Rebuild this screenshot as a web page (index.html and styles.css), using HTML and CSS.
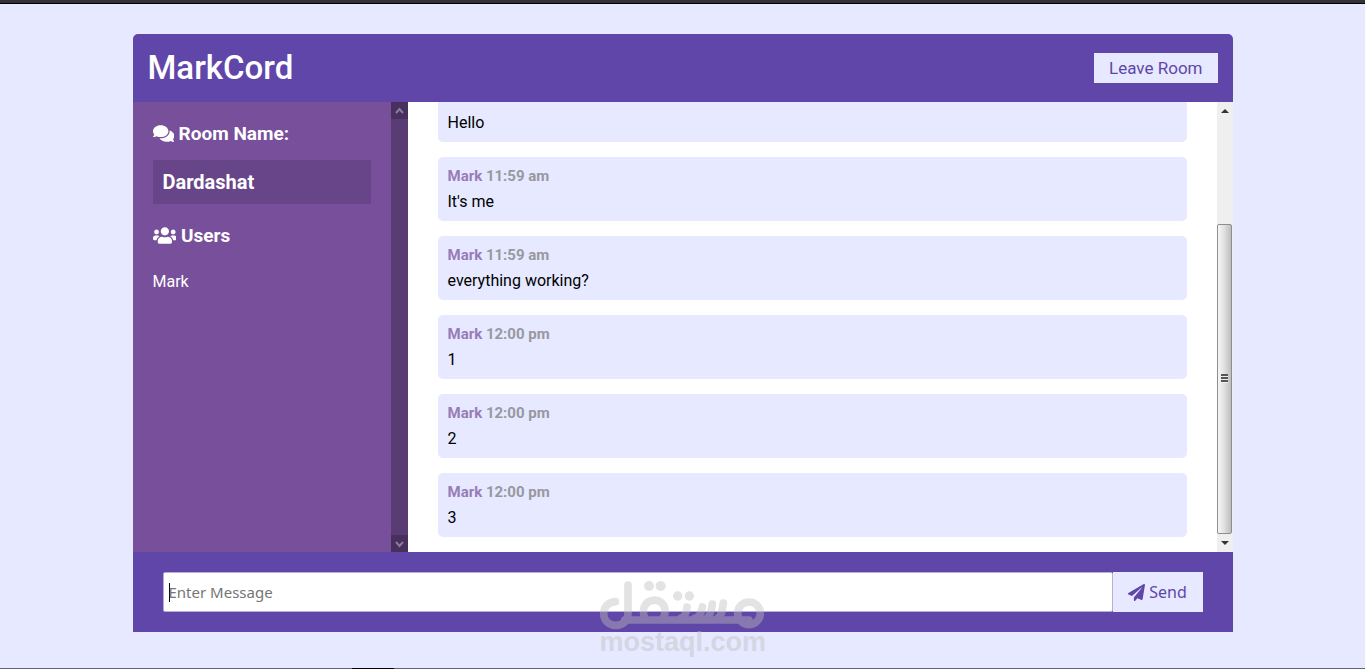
FILE: index.html
```html
<!DOCTYPE html>
<html lang="en">
<head>
  <meta charset="UTF-8">
  <meta name="viewport" content="width=device-width, initial-scale=1.0">
  <title>MarkCord</title>
  <link rel="stylesheet" href="styles.css">
</head>
<body>

<div class="top-strip"></div>

<div class="chat-container">
  <header class="chat-header">
    <h1>MarkCord</h1>
    <a href="#" class="btn">Leave Room</a>
  </header>

  <main class="chat-main">
    <aside class="chat-sidebar">
      <div class="sidebar-content">
        <h3>
          <svg class="icon-comments" viewBox="0 0 576 512"><path d="M416 192c0-88.400-93.100-160-208-160S0 103.600 0 192c0 34.300 14.100 65.900 38 92-13.400 30.200-35.500 54.200-35.800 54.500-2.200 2.300-2.800 5.700-1.500 8.700S4.800 352 8 352c36.600 0 66.900-12.300 88.700-25 32.200 15.700 70.300 25 111.300 25 114.900 0 208-71.600 208-160zm122 220c23.900-26 38-57.700 38-92 0-66.900-53.500-124.200-129.300-148.100.9 6.600 1.300 13.300 1.300 20.100 0 105.900-107.700 192-240 192-10.800 0-21.300-.8-31.700-1.900C207.800 439.600 281.800 480 368 480c41 0 79.100-9.200 111.300-25 21.800 12.700 52.100 25 88.700 25 3.200 0 6.100-1.900 7.300-4.800 1.300-2.900.7-6.300-1.500-8.700-.3-.3-22.400-24.200-35.800-54.500z"/></svg>
          Room Name:
        </h3>
        <h2>Dardashat</h2>
        <h3>
          <svg class="icon-users" viewBox="0 0 640 512"><path d="M96 224c35.300 0 64-28.700 64-64s-28.700-64-64-64-64 28.700-64 64 28.700 64 64 64zm448 0c35.300 0 64-28.700 64-64s-28.700-64-64-64-64 28.700-64 64 28.700 64 64 64zm32 32h-64c-17.600 0-33.500 7.100-45.100 18.600 40.300 22.100 68.900 62 75.100 109.400h66c17.700 0 32-14.300 32-32v-32c0-35.300-28.700-64-64-64zm-256 0c61.900 0 112-50.100 112-112S381.900 32 320 32 208 82.100 208 144s50.100 112 112 112zm76.800 32h-8.300c-20.800 10-43.900 16-68.500 16s-47.600-6-68.500-16h-8.300C179.600 288 128 339.600 128 403.200V432c0 26.500 21.500 48 48 48h288c26.500 0 48-21.500 48-48v-28.800c0-63.600-51.600-115.200-115.200-115.200zm-223.700-13.400C161.500 263.100 145.600 256 128 256H64c-35.300 0-64 28.700-64 64v32c0 17.700 14.300 32 32 32h65.900c6.300-47.400 34.900-87.300 75.200-109.400z"/></svg>
          Users
        </h3>
        <ul class="user-list">
          <li>Mark</li>
        </ul>
      </div>
      <div class="scrollbar-dark">
        <span class="arrow"><svg viewBox="0 0 9 8"><path d="M1 6l3.500-4L8 6"/></svg></span>
        <span class="arrow"><svg viewBox="0 0 9 8"><path d="M1 2l3.500 4L8 2"/></svg></span>
      </div>
    </aside>

    <section class="chat-view">
      <div class="chat-messages">
        <div class="message">
          <p class="text">Hello</p>
        </div>
        <div class="message">
          <p class="meta">Mark <span>11:59 am</span></p>
          <p class="text">It's me</p>
        </div>
        <div class="message">
          <p class="meta">Mark <span>11:59 am</span></p>
          <p class="text">everything working?</p>
        </div>
        <div class="message">
          <p class="meta">Mark <span>12:00 pm</span></p>
          <p class="text">1</p>
        </div>
        <div class="message">
          <p class="meta">Mark <span>12:00 pm</span></p>
          <p class="text">2</p>
        </div>
        <div class="message">
          <p class="meta">Mark <span>12:00 pm</span></p>
          <p class="text">3</p>
        </div>
      </div>
      <div class="scrollbar-light">
        <span class="arrow"><svg viewBox="0 0 8 4"><path d="M0 4l4-4 4 4z"/></svg></span>
        <div class="track">
          <div class="thumb"><i></i><i></i><i></i></div>
        </div>
        <span class="arrow"><svg viewBox="0 0 8 4"><path d="M0 0l4 4 4-4z"/></svg></span>
      </div>
    </section>
  </main>

  <footer class="chat-form-container">
    <form class="chat-form" onsubmit="return false;">
      <input type="text" id="msg" placeholder="Enter Message" aria-label="Enter Message" autocomplete="off">
      <button type="submit" class="btn-send">
        <svg viewBox="0 0 512 512"><path d="M476 3.200L12.500 270.600c-18.100 10.400-15.800 35.600 2.200 43.200L121 358.400l287.300-253.200c5.500-4.900 13.300 2.600 8.600 8.300L176 407v80.500c0 23.600 28.500 32.900 42.500 15.800L282 426l124.600 52.200c14.200 6 30.400-2.900 33-18.200l72-432C515 7.800 493.300-6.800 476 3.200z"/></svg>
        Send
      </button>
    </form>
  </footer>
</div>

<div class="watermark">
  <svg viewBox="60 30 492 150">
    <g>
      <path d="M106 95C84 96 71 112 71 131C71 151 87 166 107 166C130 166 144 151 144 130V45"/>
      <path d="M134 150H507"/>
      <path d="M196 145C188 132 188 115 197 103C207 90 229 86 243 97C257 108 259 128 249 145"/>
      <path d="M302 145C314 142 319 133 321 111"/>
      <path d="M345 145C358 142 363 132 367 111"/>
      <path d="M380 145C390 138 394 124 397 102"/>
      <path d="M413 145C424 138 427 124 430 99"/>
      <circle cx="507" cy="130" r="34"/>
    </g>
    <circle cx="207" cy="48" r="15"/>
    <circle cx="242" cy="48" r="15"/>
    <circle cx="293" cy="78" r="14"/>
    <circle cx="328" cy="78" r="14"/>
  </svg>
  <span>mostaql.com</span>
</div>

<div class="bottom-strip"><span></span></div>

</body>
</html>
```
FILE: styles.css
```css
:root {
  --dark: #6046a8;
  --main: #774f9b;
  --light: #e6e9ff;
}
* {
  box-sizing: border-box;
  margin: 0;
  padding: 0;
}
body {
  display: flex;
  flex-direction: column;
  min-height: 100vh;
  font-family: Roboto, sans-serif;
  font-size: 16px;
  line-height: 20px;
  background: var(--light);
  color: #000;
}
ul { list-style: none; }
a { text-decoration: none; }

.top-strip {
  height: 4px;
  background: #323237;
  border-bottom: 1px solid #000;
}
.bottom-strip {
  height: 1px;
  margin-top: auto;
  padding-left: 352px;
  background: #62636f;
}
.bottom-strip span {
  display: block;
  width: 42px;
  height: 1px;
  background: #000;
}

.chat-container {
  width: 100%;
  max-width: 1100px;
  margin: 30px auto;
}
.chat-header {
  display: flex;
  align-items: center;
  justify-content: space-between;
  padding: 15px;
  border-radius: 5px 5px 0 0;
  background: var(--dark);
  color: #fff;
}
.chat-header h1 {
  font-size: 33px;
  font-weight: 500;
  line-height: 38px;
}
.btn {
  padding: 5px 15px;
  font-size: 17px;
  background: var(--light);
  color: var(--dark);
}

.chat-main {
  display: grid;
  grid-template-columns: 1fr 3fr;
  height: 450px;
}
.chat-sidebar {
  display: flex;
  background: var(--main);
  color: #fff;
}
.sidebar-content {
  flex: 1;
  padding: 20px;
}
.chat-sidebar h3 {
  margin-bottom: 15px;
  font-size: 19px;
  font-weight: 700;
  line-height: 23px;
}
.chat-sidebar h3 svg {
  height: 19px;
  vertical-align: -3px;
  fill: #fff;
}
.chat-sidebar h2 {
  margin-bottom: 20px;
  padding: 10px;
  font-size: 20px;
  font-weight: 700;
  line-height: 24px;
  background: rgba(0, 0, 0, 0.12);
}
.user-list li {
  padding: 10px 0;
}

.scrollbar-dark {
  display: flex;
  flex-direction: column;
  justify-content: space-between;
  width: 17px;
  background: #593c74;
}
.scrollbar-dark .arrow {
  display: flex;
  align-items: center;
  justify-content: center;
  height: 17px;
  background: #47305d;
}
.scrollbar-dark svg {
  width: 9px;
  fill: none;
  stroke: #8d7a9f;
  stroke-width: 2;
}

.chat-view {
  display: flex;
  min-height: 0;
  background: #fff;
}
/* newest message stays at the bottom */
.chat-messages {
  flex: 1;
  display: flex;
  flex-direction: column;
  justify-content: flex-end;
  padding: 0 30px;
  overflow: hidden;
}
.message {
  flex-shrink: 0;
  margin-bottom: 15px;
  padding: 10px;
  border-radius: 5px;
  background: var(--light);
}
/* continues above the visible area */
.message:first-child {
  border-radius: 0 0 5px 5px;
}
.message .meta {
  margin-bottom: 6px;
  font-size: 15px;
  font-weight: 700;
  line-height: 18px;
  color: var(--main);
  opacity: 0.7;
}
.message .meta span { color: #777; }
.message .text {
  padding-top: 2px;
  line-height: 18px;
}

.scrollbar-light {
  display: flex;
  flex-direction: column;
  width: 16px;
  background: #efefef;
}
.scrollbar-light .arrow {
  display: flex;
  align-items: center;
  justify-content: center;
  height: 18px;
}
.scrollbar-light svg {
  width: 8px;
  height: 4px;
  fill: #333;
}
.scrollbar-light .track {
  flex: 1;
  display: flex;
  align-items: flex-end;
}
.scrollbar-light .thumb {
  display: flex;
  flex-direction: column;
  align-items: center;
  justify-content: center;
  width: 15px;
  height: 75%;
  border: 1px solid #8e8e8e;
  border-radius: 2px;
  background: linear-gradient(to right, #f6f6f6, #e2e2e2 45%, #bdbdbd);
}
.scrollbar-light i {
  width: 7px;
  height: 3px;
  border-top: 2px solid #555;
  border-bottom: 1px solid #eee;
}

.chat-form-container {
  padding: 20px 30px;
  background: var(--dark);
}
.chat-form { display: flex; }
.chat-form input,
.btn-send {
  font-family: "Noto Sans", sans-serif;
}
/* the gradient is the text cursor */
.chat-form input {
  flex: 1;
  height: 40px;
  padding: 0 5px;
  border: 1px solid #b9aed8;
  border-radius: 2px;
  background: linear-gradient(#000, #000) 5px 50% / 1px 19px no-repeat #fff;
  font-size: 15px;
  outline: none;
}
.chat-form input::placeholder { color: #757575; }
.btn-send {
  display: flex;
  align-items: center;
  justify-content: center;
  gap: 4px;
  width: 90px;
  border: none;
  background: var(--light);
  color: var(--dark);
  font-size: 16px;
  cursor: pointer;
}
.btn-send svg {
  width: 17px;
  fill: var(--dark);
}

.watermark {
  position: absolute;
  bottom: 13px;
  left: 50%;
  width: 164px;
  margin-left: -83px;
  opacity: 0.42;
  color: #bdbdbd;
  text-align: center;
  pointer-events: none;
}
.watermark svg {
  display: block;
  width: 100%;
  fill: #bdbdbd;
}
.watermark g {
  fill: none;
  stroke: #bdbdbd;
  stroke-width: 23;
  stroke-linecap: round;
}
.watermark span {
  font-family: "Liberation Sans", Arial, sans-serif;
  font-size: 27px;
  font-weight: 700;
  line-height: 25px;
}
```
